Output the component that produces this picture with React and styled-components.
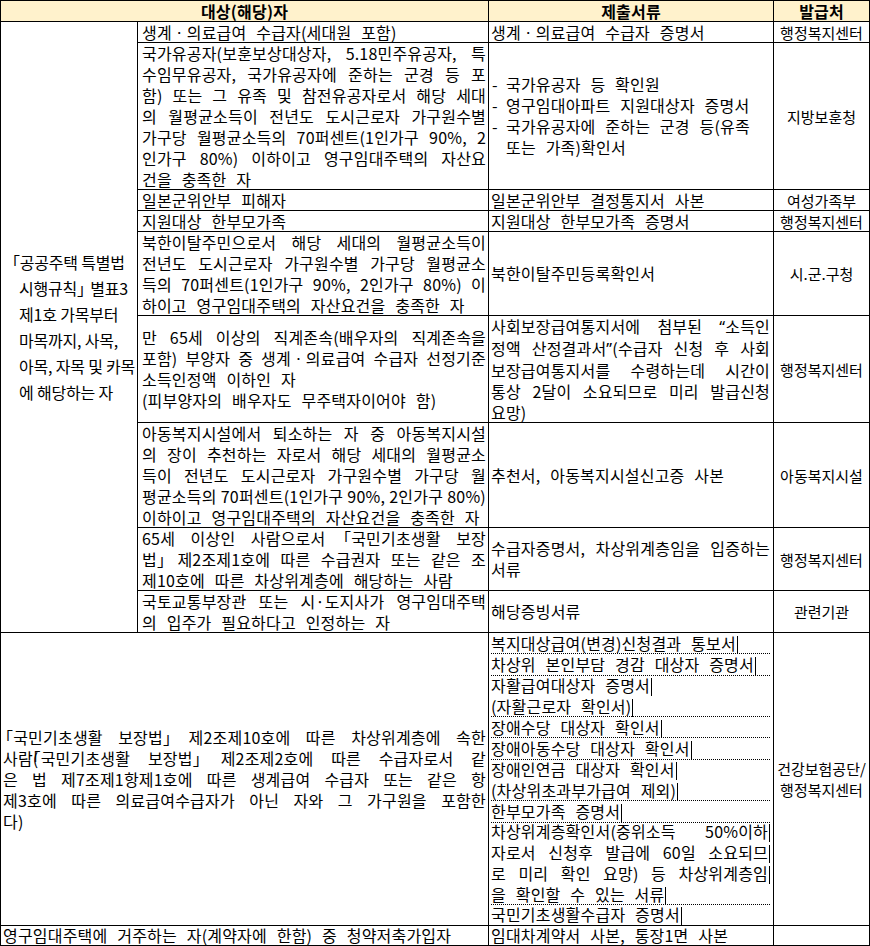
import React from 'react';
import styled, { createGlobalStyle } from 'styled-components';

const GlobalStyle = createGlobalStyle`
  html, body {
    margin: 0;
    padding: 0;
    background: #fff;
  }
  body {
    font-family: "Noto Sans CJK KR", "Noto Sans", sans-serif;
    color: #000;
  }
`;

const Table = styled.table`
  border-collapse: collapse;
  table-layout: fixed;
  width: 870px;
  font-size: 16px;
  line-height: 21px;
  letter-spacing: 0.2px;
`;

const Row = styled.tr`
  height: ${props => props.$h}px;
`;

const Head = styled.th`
  background: #fff2cc;
  border: 1px solid #000;
  padding: 0;
  font-size: 16px;
  line-height: 20px;
  font-weight: 700;
  text-align: center;
  vertical-align: middle;
`;

const Cell = styled.td`
  border: 1px solid #000;
  padding: 0 ${props => props.$pr ?? 2}px 0 ${props => props.$pl ?? 3}px;
  text-align: ${props => props.$align || 'left'};
  font-size: ${props => (props.$small ? 15 : 16)}px;
  letter-spacing: ${props => (props.$small ? 0 : 0.2)}px;
  vertical-align: middle;
`;

// pulls the cell content in by half a border so rows keep the sheet's pitch
const Fill = styled.div`
  margin: ${props => -(props.$trim ?? 1) / 2}px 0;
`;

const Line = styled.div`
  text-align: ${props => (props.$justify ? 'justify' : 'left')};
  text-align-last: ${props => (props.$justify ? 'justify' : 'auto')};
  white-space: ${props => (props.$justify ? 'normal' : 'nowrap')};
  word-spacing: ${props => (props.$justify ? 0 : 6)}px;
`;

const Centered = styled.div`
  text-align: center;
  white-space: nowrap;
`;

const Criteria = styled.div`
  line-height: 26px;
  padding-left: 18px;
  white-space: nowrap;
  letter-spacing: -0.2px;
`;

const CriteriaLine = styled.div`
  text-indent: ${props => (props.$hang ? -9 : 0)}px;
`;

// a word holding CJK punctuation; kept whole so justify only widens spaces
const Keep = styled.span`
  display: inline-block;
  white-space: nowrap;
  text-indent: 0;
`;

// the corner brackets are full width in this font; trim the empty half
const Bracket = styled.span`
  margin: ${props => (props.$open ? '0 0 0 -6px' : '0 -6px 0 0')};
`;

const Quote = styled.span`
  font-family: "Noto Sans", sans-serif;
`;

const DashItem = styled.div`
  display: flex;
  word-spacing: 6px;
  white-space: nowrap;
`;

const Dash = styled.span`
  flex: none;
  width: 14px;
  padding-left: 1px;
`;

const SubList = styled.div`
  display: flex;
  flex-direction: column;
  height: ${props => props.$h}px;
  line-height: 20px;
`;

const SubItem = styled.div`
  flex: ${props => props.$n} 0 0;
  min-height: 0;
  display: flex;
  flex-direction: column;
  justify-content: center;
  border-bottom: 1px dotted #000;

  &:last-child {
    border-bottom: none;
  }
`;

const Caret = styled.span`
  display: inline-block;
  width: 1px;
  height: 18px;
  margin-left: 1px;
  background: #000;
  vertical-align: -4px;
`;

const marks = /([「」“”])/;

const fmtWord = word =>
  word.split(marks).map((part, i) => {
    if (part === '「') return <Bracket key={i} $open>{part}</Bracket>;
    if (part === '」') return <Bracket key={i}>{part}</Bracket>;
    if (part === '“' || part === '”') return <Quote key={i}>{part}</Quote>;
    return part;
  });

const fmt = text =>
  text.split(/( )/).map((word, i) =>
    marks.test(word) ? <Keep key={i}>{fmtWord(word)}</Keep> : word
  );

// first `j` lines are stretched edge to edge, like the sheet's justify cells
const Para = ({ lines, j = lines.length - 1 }) => (
  <>
    {lines.map((line, i) => (
      <Line key={i} $justify={i < j}>{fmt(line)}</Line>
    ))}
  </>
);

const rows = [
  {
    h: 21,
    who: ['생계ㆍ의료급여 수급자(세대원 포함)'],
    doc: <Para lines={['생계ㆍ의료급여 수급자 증명서']} />,
    org: ['행정복지센터'],
  },
  {
    h: 147,
    who: [
      '국가유공자(보훈보상대상자, 5.18민주유공자, 특',
      '수임무유공자, 국가유공자에 준하는 군경 등 포',
      '함) 또는 그 유족 및 참전유공자로서 해당 세대',
      '의 월평균소득이 전년도 도시근로자 가구원수별',
      '가구당 월평균소득의 70퍼센트(1인가구 90%, 2',
      '인가구 80%) 이하이고 영구임대주택의 자산요',
      '건을 충족한 자',
    ],
    doc: (
      <>
        <DashItem><Dash>-</Dash><span>국가유공자 등 확인원</span></DashItem>
        <DashItem><Dash>-</Dash><span>영구임대아파트 지원대상자 증명서</span></DashItem>
        <DashItem>
          <Dash>-</Dash>
          <span>국가유공자에 준하는 군경 등(유족<br />또는 가족)확인서</span>
        </DashItem>
      </>
    ),
    org: ['지방보훈청'],
  },
  {
    h: 21,
    who: ['일본군위안부 피해자'],
    doc: <Para lines={['일본군위안부 결정통지서 사본']} />,
    org: ['여성가족부'],
  },
  {
    h: 21,
    who: ['지원대상 한부모가족'],
    doc: <Para lines={['지원대상 한부모가족 증명서']} />,
    org: ['행정복지센터'],
  },
  {
    h: 84,
    who: [
      '북한이탈주민으로서 해당 세대의 월평균소득이',
      '전년도 도시근로자 가구원수별 가구당 월평균소',
      '득의 70퍼센트(1인가구 90%, 2인가구 80%) 이',
      '하이고 영구임대주택의 자산요건을 충족한 자',
    ],
    doc: <Para lines={['북한이탈주민등록확인서']} />,
    org: ['시.군.구청'],
  },
  {
    h: 106,
    who: [
      '만 65세 이상의 직계존속(배우자의 직계존속을',
      '포함) 부양자 중 생계ㆍ의료급여 수급자 선정기준',
      '소득인정액 이하인 자',
      '(피부양자의 배우자도 무주택자이어야 함)',
    ],
    whoJ: 2,
    doc: (
      <Para
        lines={[
          '사회보장급여통지서에 첨부된 “소득인',
          '정액 산정결과서”(수급자 신청 후 사회',
          '보장급여통지서를 수령하는데 시간이',
          '통상 2달이 소요되므로 미리 발급신청',
          '요망)',
        ]}
      />
    ),
    org: ['행정복지센터'],
  },
  {
    h: 105,
    who: [
      '아동복지시설에서 퇴소하는 자 중 아동복지시설',
      '의 장이 추천하는 자로서 해당 세대의 월평균소',
      '득이 전년도 도시근로자 가구원수별 가구당 월',
      '평균소득의 70퍼센트(1인가구 90%, 2인가구 80%)',
      '이하이고 영구임대주택의 자산요건을 충족한 자',
    ],
    doc: <Para lines={['추천서, 아동복지시설신고증 사본']} />,
    org: ['아동복지시설'],
  },
  {
    h: 63,
    who: [
      '65세 이상인 사람으로서 「국민기초생활 보장',
      '법」 제2조제1호에 따른 수급권자 또는 같은 조',
      '제10호에 따른 차상위계층에 해당하는 사람',
    ],
    doc: <Para lines={['수급자증명서, 차상위계층임을 입증하는', '서류']} />,
    org: ['행정복지센터'],
  },
  {
    h: 42,
    who: [
      '국토교통부장관 또는 시·도지사가 영구임대주택',
      '의 입주가 필요하다고 인정하는 자',
    ],
    doc: <Para lines={['해당증빙서류']} />,
    org: ['관련기관'],
  },
];

const proofs = [
  { lines: ['복지대상급여(변경)신청결과 통보서'] },
  { lines: ['차상위 본인부담 경감 대상자 증명서'] },
  { lines: ['자활급여대상자 증명서', '(자활근로자 확인서)'] },
  { lines: ['장애수당 대상자 확인서'] },
  { lines: ['장애아동수당 대상자 확인서'] },
  { lines: ['장애인연금 대상자 확인서', '(차상위초과부가급여 제외)'] },
  { lines: ['한부모가족 증명서'] },
  {
    lines: [
      '차상위계층확인서(중위소득 50%이하',
      '자로서 신청후 발급에 60일 소요되므',
      '로 미리 확인 요망) 등 차상위계층임',
      '을 확인할 수 있는 서류',
    ],
    j: 3,
  },
  { lines: ['국민기초생활수급자 증명서'] },
];

const criteria = [
  '「공공주택 특별법',
  '시행규칙」 별표3',
  '제1호 가목부터',
  '마목까지, 사목,',
  '아목, 자목 및 카목',
  '에 해당하는 자',
];

export default function App() {
  return (
    <>
      <GlobalStyle />
      <Table>
        <colgroup>
          <col style={{ width: 137 }} />
          <col style={{ width: 351 }} />
          <col style={{ width: 285 }} />
          <col style={{ width: 96 }} />
        </colgroup>
        <thead>
          <Row $h={21}>
            <Head colSpan={2}>대상(해당)자</Head>
            <Head>제출서류</Head>
            <Head>발급처</Head>
          </Row>
        </thead>
        <tbody>
          {rows.map((row, i) => (
            <Row key={i} $h={row.h}>
              {i === 0 && (
                <Cell rowSpan={rows.length} $pl={0}>
                  <Criteria>
                    {criteria.map((c, k) => (
                      <CriteriaLine key={k} $hang={k === 0}>{fmt(c)}</CriteriaLine>
                    ))}
                  </Criteria>
                </Cell>
              )}
              <Cell $pl={4} $pr={2}>
                <Fill>
                  <Para lines={row.who} j={row.whoJ ?? row.who.length - 1} />
                </Fill>
              </Cell>
              <Cell $pl={2} $pr={3}>
                <Fill>{row.doc}</Fill>
              </Cell>
              <Cell $align="center" $pl={0} $pr={0} $small>
                <Fill>
                  {row.org.map((o, k) => <Centered key={k}>{o}</Centered>)}
                </Fill>
              </Cell>
            </Row>
          ))}
          <Row $h={293}>
            <Cell colSpan={2} $pl={2} $pr={2}>
              <Para
                lines={[
                  '「국민기초생활 보장법」 제2조제10호에 따른 차상위계층에 속한',
                  '사람(「국민기초생활 보장법」 제2조제2호에 따른 수급자로서 같',
                  '은 법 제7조제1항제1호에 따른 생계급여 수급자 또는 같은 항',
                  '제3호에 따른 의료급여수급자가 아닌 자와 그 가구원을 포함한',
                  '다)',
                ]}
              />
            </Cell>
            <Cell $pl={2} $pr={3}>
              <SubList $h={292}>
                {proofs.map((p, k) => {
                  const j = p.j ?? 0;
                  return (
                    <SubItem key={k} $n={p.lines.length}>
                      {p.lines.map((l, m) => (
                        <Line key={m} $justify={m < j}>
                          {l}
                          <Caret />
                        </Line>
                      ))}
                    </SubItem>
                  );
                })}
              </SubList>
            </Cell>
            <Cell $align="center" $pl={0} $pr={0} $small>
              <Centered>건강보험공단/</Centered>
              <Centered>행정복지센터</Centered>
            </Cell>
          </Row>
          <Row $h={20}>
            <Cell colSpan={2} $pl={2}>
              <Fill $trim={2}>
                <Para lines={['영구임대주택에 거주하는 자(계약자에 한함) 중 청약저축가입자']} />
              </Fill>
            </Cell>
            <Cell $pl={2} $pr={3}>
              <Fill $trim={2}>
                <Para lines={['임대차계약서 사본, 통장1면 사본']} />
              </Fill>
            </Cell>
            <Cell />
          </Row>
        </tbody>
      </Table>
    </>
  );
}
